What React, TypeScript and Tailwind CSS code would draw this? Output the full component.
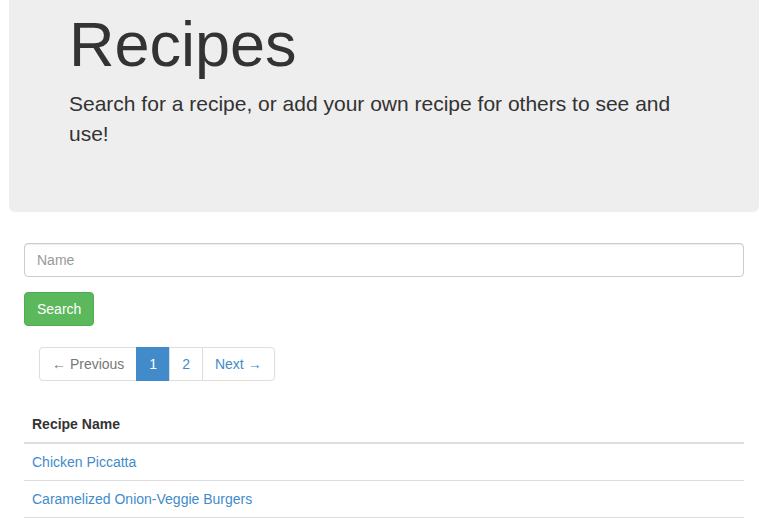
import React from "react";

export default function App() {
  const font = { fontFamily: '"Liberation Sans", Arial, Helvetica, sans-serif' };
  return (
    <div className="min-h-[528px] bg-white text-[#333] text-[14px] leading-[20px]" style={font}>
      <div className="ml-[9px] w-[750px]">
        <div className="bg-[#eeeeee] rounded-b-[6px] px-[60px] pt-[10px] pb-[48px]">
          <h1 className="text-[63px] leading-[1.1] font-normal mb-[10px]">Recipes</h1>
          <p className="text-[21px] leading-[30px] mb-[15px]">
            Search for a recipe, or add your own recipe for others to see and use!
          </p>
        </div>
        <div className="px-[15px] pt-[31px]">
          <div className="mb-[15px]">
            <input
              type="text"
              placeholder="Name"
              className="block w-full h-[34px] px-[12px] py-[6px] text-[14px] leading-[20px] border border-[#cccccc] rounded-[4px] bg-white text-[#555] placeholder:text-[#999] outline-none shadow-[inset_0_1px_1px_rgba(0,0,0,0.075)]"
            />
          </div>
          <button className="h-[34px] px-[12px] py-[6px] text-[14px] leading-[20px] text-white bg-[#5cb85c] border border-[#4cae4c] rounded-[4px]">
            Search
          </button>
          <div className="ml-[15px] mt-[21px] mb-[25px] flex">
            <span className="px-[12px] py-[6px] leading-[20px] border border-[#dddddd] rounded-l-[4px] text-[#777] bg-white">
              ← Previous
            </span>
            <span className="-ml-px px-[12px] py-[6px] leading-[20px] border border-[#428bca] bg-[#428bca] text-white">
              1
            </span>
            <a className="-ml-px px-[12px] py-[6px] leading-[20px] border border-[#dddddd] text-[#428bca] bg-white">
              2
            </a>
            <a className="-ml-px px-[12px] py-[6px] leading-[20px] border border-[#dddddd] rounded-r-[4px] text-[#428bca] bg-white">
              Next →
            </a>
          </div>
          <table className="w-full border-collapse">
            <thead>
              <tr>
                <th className="text-left font-bold p-[8px] border-b-2 border-[#dddddd]">Recipe Name</th>
              </tr>
            </thead>
            <tbody>
              <tr>
                <td className="p-[8px] border-b border-[#dddddd]">
                  <a className="text-[#428bca]">Chicken Piccatta</a>
                </td>
              </tr>
              <tr>
                <td className="p-[8px] border-b border-[#dddddd]">
                  <a className="text-[#428bca]">Caramelized Onion-Veggie Burgers</a>
                </td>
              </tr>
            </tbody>
          </table>
        </div>
      </div>
    </div>
  );
}
